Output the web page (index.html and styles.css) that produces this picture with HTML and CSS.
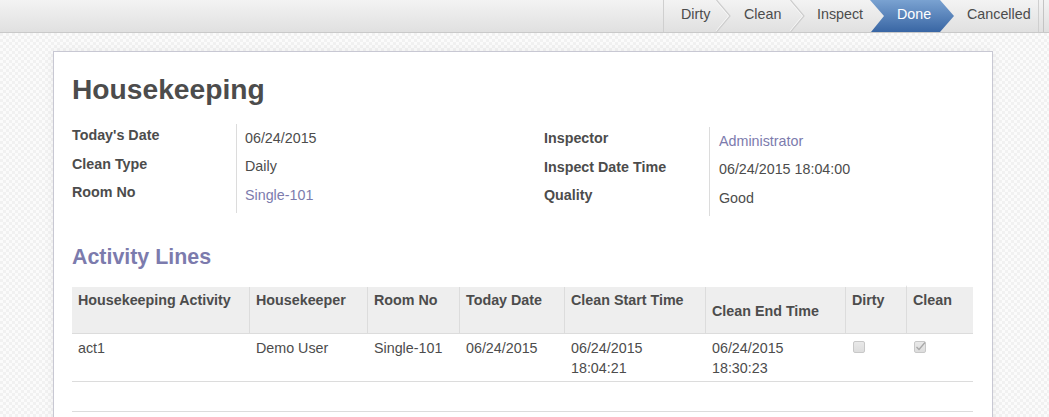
FILE: index.html
```html
<!DOCTYPE html>
<html>
<head>
<meta charset="utf-8">
<title>Housekeeping</title>
<link rel="stylesheet" href="styles.css">
</head>
<body>
<header class="topbar">
  <ul class="statusbar">
    <li class="st st-dirty">Dirty</li>
    <li class="chev"><svg width="15" height="32" viewBox="0 0 15 32"><polyline class="chev-hi" points="-0.5,0 13,16 -0.5,32"/><polyline class="chev-line" points="0.5,0 14,16 0.5,32"/></svg></li>
    <li class="st st-clean">Clean</li>
    <li class="chev"><svg width="15" height="32" viewBox="0 0 15 32"><polyline class="chev-hi" points="-0.5,0 13,16 -0.5,32"/><polyline class="chev-line" points="0.5,0 14,16 0.5,32"/></svg></li>
    <li class="st st-inspect">Inspect</li>
    <li class="st st-done">Done</li>
    <li class="st st-cancelled">Cancelled</li>
  </ul>
  <div class="edge"></div>
</header>

<main class="main">
  <section class="sheet">
    <h1 class="title">Housekeeping</h1>

    <div class="groups">
      <div class="group group-left">
        <div class="labels">
          <div class="row">Today's Date</div>
          <div class="row">Clean Type</div>
          <div class="row">Room No</div>
        </div>
        <div class="values">
          <div class="row">06/24/2015</div>
          <div class="row">Daily</div>
          <div class="row"><a class="link">Single-101</a></div>
        </div>
      </div>
      <div class="group group-right">
        <div class="labels">
          <div class="row">Inspector</div>
          <div class="row">Inspect Date Time</div>
          <div class="row">Quality</div>
        </div>
        <div class="values">
          <div class="row"><a class="link">Administrator</a></div>
          <div class="row">06/24/2015 18:04:00</div>
          <div class="row">Good</div>
        </div>
      </div>
    </div>

    <h2 class="section-title">Activity Lines</h2>

    <div class="lines">
      <div class="lrow lhead">
        <div class="cell">Housekeeping Activity</div>
        <div class="cell">Housekeeper</div>
        <div class="cell">Room No</div>
        <div class="cell">Today Date</div>
        <div class="cell">Clean Start Time</div>
        <div class="cell cell-mid">Clean End Time</div>
        <div class="cell">Dirty</div>
        <div class="cell cell-last">Clean</div>
      </div>
      <div class="lrow lbody">
        <div class="cell">act1</div>
        <div class="cell">Demo User</div>
        <div class="cell">Single-101</div>
        <div class="cell">06/24/2015</div>
        <div class="cell">06/24/2015<br>18:04:21</div>
        <div class="cell">06/24/2015<br>18:30:23</div>
        <div class="cell"><span class="cb"></span></div>
        <div class="cell"><span class="cb cb-checked"><svg width="12" height="12" viewBox="0 0 12 12"><polyline points="2.5,6 5,8.5 11,1.5" /></svg></span></div>
      </div>
      <div class="lrow lempty"></div>
    </div>
  </section>
</main>
</body>
</html>
```

FILE: styles.css
```css
* { box-sizing: border-box; }

html, body { margin: 0; padding: 0; }

body {
  font-family: "Liberation Sans", Arial, sans-serif;
  font-size: 14.3px;
  color: #4c4c4c;
  background-color: #f7f7f7;
  background-image: repeating-conic-gradient(#f1f1f1 0 25%, #fbfbfb 0 50%);
  background-size: 6px 6px;
  height: 417px;
  overflow: hidden;
}

/* ---------- top bar / status ---------- */
.topbar {
  height: 33px;
  border-bottom: 1px solid #c9c9c9;
  background: linear-gradient(#f3f3f3, #e0e0e0);
  display: flex;
  justify-content: flex-end;
}

.statusbar {
  list-style: none;
  margin: 0;
  padding: 0;
  display: flex;
  height: 32px;
  border-left: 1px solid #cfcfcf;
  border-right: 1px solid #cfcfcf;
}

.st {
  height: 32px;
  line-height: 28px;
  white-space: nowrap;
}

.st-dirty { width: 52px; padding-left: 17px; }
.st-clean { width: 59px; padding-left: 13px; }
.st-inspect { width: 65px; padding-left: 12px; }
.st-done {
  width: 84px;
  padding-left: 27px;
  color: #fff;
  background: linear-gradient(#7aa2d1, #3966a4);
  clip-path: polygon(0 0, 70px 0, 84px 50%, 70px 100%, 1px 100%, 14px 50%);
}
.st-cancelled { width: 84px; padding-left: 13px; }

.chev { width: 15px; height: 32px; }
.chev svg { display: block; }
.chev-line { fill: none; stroke: #cdcdcd; stroke-width: 1.2; }
.chev-hi { fill: none; stroke: #fafafa; stroke-width: 1.2; }

.edge {
  width: 6px;
  margin-left: 4px;
  border-left: 1px solid #c4c4c4;
}

/* ---------- sheet ---------- */
.main {
  padding: 18px 0 0 53px;
}

.sheet {
  width: 940px;
  background: #fff;
  border: 1px solid #c8c8d3;
  box-shadow: 0 0 10px rgba(0, 0, 0, 0.06);
  padding: 21px 19px 60px 18px;
}

.title {
  margin: 0;
  font-size: 28.2px;
  line-height: 32px;
  font-weight: bold;
  color: #4c4c4c;
}

.groups {
  display: grid;
  grid-template-columns: 472px 1fr;
  align-items: start;
  margin-top: 19px;
}

.group { display: flex; align-items: flex-start; }
.group-right { margin-top: 3px; }

.labels { font-weight: bold; padding-top: 1px; }
.group-left .labels { width: 164px; }
.group-right .labels { width: 165px; }

.values {
  border-left: 1px solid #dcdcdc;
  padding-top: 3.5px;
}
.group-left .values { padding-left: 8px; }
.group-right .values { padding-left: 9px; }

.row {
  height: 28.5px;
  line-height: 20px;
  white-space: nowrap;
}

.link { color: #7c7bad; text-decoration: none; }

.section-title {
  margin: 28px 0 17px;
  font-size: 21.4px;
  line-height: 26px;
  font-weight: bold;
  color: #7c7bad;
}

/* ---------- one2many list ---------- */
.lrow {
  display: grid;
  grid-template-columns: 177px 118px 92px 105px 141px 140px 61px 66px;
  border-bottom: 1px solid #dcdcdc;
}

.cell {
  padding: 3px 6px;
  line-height: 20px;
  white-space: nowrap;
}
.cell + .cell { border-left: 1px solid transparent; }

.lhead {
  height: 47px;
  background: #eeeeee;
  font-weight: bold;
}
.lhead .cell + .cell { border-left-color: #dcdcdc; }
.lhead .cell-mid { display: flex; align-items: center; padding-top: 5px; }
.lhead .cell-last { border-top: 2px solid transparent; margin-top: -2px; }

.lbody .cell { padding: 3.7px 6px 3.3px; }

.lempty { height: 30px; }

.cb {
  display: block;
  width: 12px;
  height: 12px;
  margin: 3px 0 0 1px;
  border: 1px solid #c8c8c8;
  border-radius: 2px;
  background: linear-gradient(#e9e9e9, #dddddd);
  position: relative;
}
.cb svg { display: block; position: absolute; left: -1px; top: -1px; overflow: visible; }
.cb svg polyline { fill: none; stroke: #a8a8a8; stroke-width: 1.3; }
```
